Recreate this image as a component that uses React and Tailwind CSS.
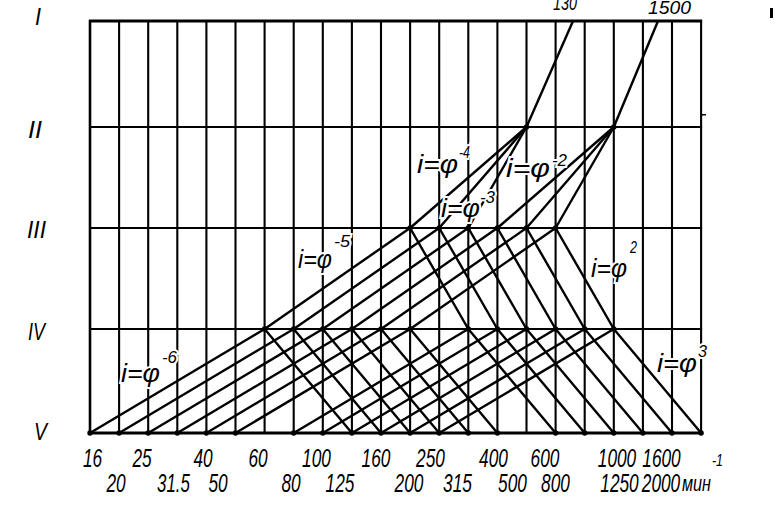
import React from 'react';

// сетка: 22 частоты вращения, 5 валов
const X0 = 90;
const STEP = 29.1;
const x = (c) => X0 + c * STEP;
const Y = { I: 21, II: 127, III: 228, IV: 329, V: 433 };

const shafts = [
  { label: 'I', y: Y.I, lx: 35, ly: 25, len: 6 },
  { label: 'II', y: Y.II, lx: 28, ly: 138, len: 14 },
  { label: 'III', y: Y.III, lx: 27, ly: 238, len: 19 },
  { label: 'IV', y: Y.IV, lx: 28, ly: 340, len: 17 },
  { label: 'V', y: Y.V, lx: 34, ly: 440, len: 13 },
];

// подписи частот: [текст, центр]
const row1 = [
  ['16', 92.5], ['25', 142], ['40', 203], ['60', 258], ['100', 316.5], ['160', 376],
  ['250', 430.5], ['400', 493.5], ['600', 545], ['1000', 617], ['1600', 661.5],
];
const row2 = [
  ['20', 116], ['31.5', 173.5], ['50', 218], ['80', 291], ['125', 340], ['200', 409],
  ['315', 457.5], ['500', 512.5], ['800', 555.5], ['1250', 619.5], ['2000', 661],
];

const labelWidth = (t) => t.replace('.', '').length * 9.6 + (t.includes('.') ? 4 : 0);

// передаточные отношения: [x, база, ширина, степень, x степени, база степени, ширина степени]
const ratios = [
  [417, 173, 41, '-4', 459, 158, 11],
  [506, 177, 44, '-2', 552, 166, 15],
  [441, 217, 39, '-3', 480, 203, 15],
  [298, 268, 34, '-5', 334, 247, 16],
  [591, 277, 36, '2', 630, 253, 7],
  [657, 372, 40, '3', 698, 357, 9],
  [121, 382, 39, '-6', 162, 363, 15],
];

const buildRays = () => {
  const rays = [];
  // I -> II
  rays.push([573, Y.I, x(15), Y.II]);
  rays.push([658, Y.I, x(18), Y.II]);
  // II -> III
  [15, 18].forEach((c) => {
    [4, 3, 2].forEach((d) => rays.push([x(c), Y.II, x(c - d), Y.III]));
  });
  // III -> IV
  for (let c = 11; c <= 16; c++) {
    rays.push([x(c), Y.III, x(c - 5), Y.IV]);
    rays.push([x(c), Y.III, x(c + 2), Y.IV]);
  }
  // IV -> V
  [6, 7, 8, 9, 10, 11, 13, 14, 15, 16, 17, 18].forEach((c) => {
    rays.push([x(c), Y.IV, x(c - 6), Y.V]);
    rays.push([x(c), Y.IV, x(c + 3), Y.V]);
  });
  return rays;
};

const buildNodes = () => {
  const nodes = [[x(15), Y.II], [x(18), Y.II]];
  for (let c = 11; c <= 16; c++) nodes.push([x(c), Y.III]);
  [6, 7, 8, 9, 10, 11, 13, 14, 15, 16, 17, 18].forEach((c) => nodes.push([x(c), Y.IV]));
  for (let c = 0; c <= 21; c++) {
    if (c !== 6 && c !== 15) nodes.push([x(c), Y.V]);
  }
  return nodes;
};

const SpeedDiagram = () => {
  const rays = buildRays();
  const nodes = buildNodes();

  return (
    <svg
      width="775"
      height="505"
      viewBox="0 0 775 505"
      className="block font-['Liberation_Sans_Narrow','Liberation_Sans',sans-serif] italic"
    >
      {/* вертикали сетки */}
      {Array.from({ length: 22 }, (_, c) => (
        <line
          key={`v${c}`}
          x1={x(c)}
          y1={Y.I - 1}
          x2={x(c)}
          y2={Y.V + 1}
          stroke="black"
          strokeWidth={c === 0 ? 2.6 : 2.1}
        />
      ))}

      {/* горизонтали валов */}
      {shafts.map((s) => (
        <line
          key={`h${s.label}`}
          x1={X0 - 1}
          y1={s.y}
          x2={x(21) + 1}
          y2={s.y}
          stroke="black"
          strokeWidth={s.label === 'I' || s.label === 'V' ? 2.8 : 2.1}
        />
      ))}

      {/* лучи */}
      {rays.map(([x1, y1, x2, y2], i) => (
        <line key={`r${i}`} x1={x1} y1={y1} x2={x2} y2={y2} stroke="black" strokeWidth="2.4" />
      ))}

      {nodes.map(([cx, cy], i) => (
        <circle key={`n${i}`} cx={cx} cy={cy} r="2.7" fill="black" />
      ))}

      {/* номера валов */}
      {shafts.map((s) => (
        <text
          key={`l${s.label}`}
          x={s.lx}
          y={s.ly}
          fontSize="24"
          textLength={s.len}
          lengthAdjust="spacingAndGlyphs"
          fill="black"
        >
          {s.label}
        </text>
      ))}

      {/* частоты двигателя */}
      <text x="553" y="10" fontSize="20" textLength="24" lengthAdjust="spacingAndGlyphs">130</text>
      <text x="648" y="14" fontSize="19" textLength="43" lengthAdjust="spacingAndGlyphs">1500</text>
      <rect x="770" y="8" width="3" height="10" fill="black" />
      <rect x="702" y="114" width="4" height="1.5" fill="black" />

      {/* передаточные отношения */}
      {ratios.map(([lx, ly, len, p, px, py, plen]) => (
        <g key={p} fill="black" stroke="white" strokeWidth="4" paintOrder="stroke">
          <text x={lx} y={ly} fontSize="25" textLength={len} lengthAdjust="spacingAndGlyphs">
            i=φ
          </text>
          <text x={px} y={py} fontSize="16" textLength={plen} lengthAdjust="spacingAndGlyphs">
            {p}
          </text>
        </g>
      ))}

      {/* шкала частот */}
      {row1.map(([t, cx]) => (
        <text
          key={`a${t}`}
          x={cx - labelWidth(t) / 2}
          y="467"
          fontSize="26"
          textLength={labelWidth(t)}
          lengthAdjust="spacingAndGlyphs"
        >
          {t}
        </text>
      ))}
      {row2.map(([t, cx]) => (
        <text
          key={`b${t}`}
          x={cx - labelWidth(t) / 2}
          y="492"
          fontSize="26"
          textLength={labelWidth(t)}
          lengthAdjust="spacingAndGlyphs"
        >
          {t}
        </text>
      ))}
      <text x="682" y="491" fontSize="22" textLength="29" lengthAdjust="spacingAndGlyphs">мин</text>
      <text x="712" y="466" fontSize="16" textLength="11" lengthAdjust="spacingAndGlyphs">-1</text>
    </svg>
  );
};

export default function App() {
  return (
    <div className="w-[775px] h-[505px] bg-white overflow-hidden">
      <SpeedDiagram />
    </div>
  );
}
